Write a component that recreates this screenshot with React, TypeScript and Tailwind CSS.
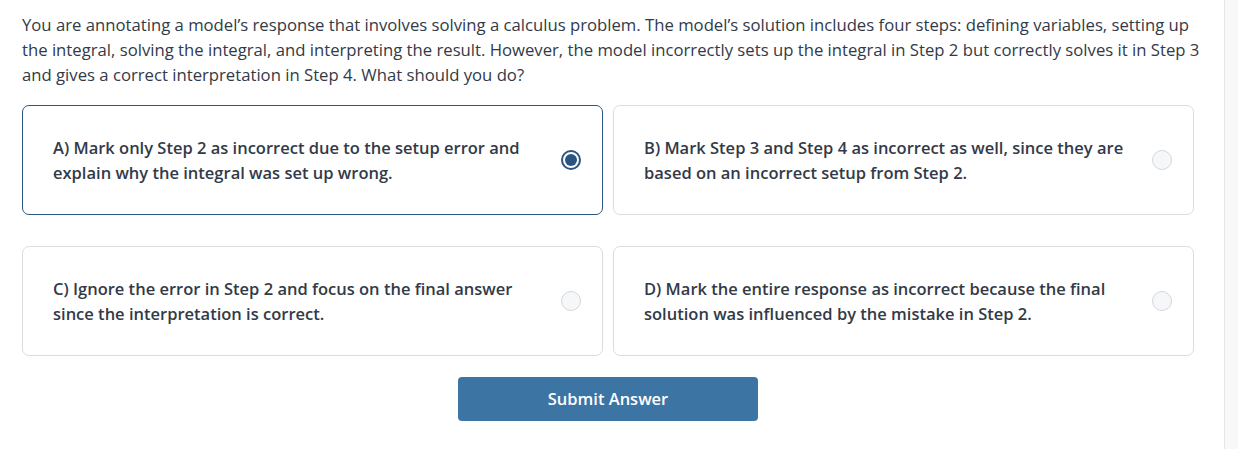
import React, { useState } from "react";

const options = [
  {
    id: "A",
    lines: ["A) Mark only Step 2 as incorrect due to the setup error and", "explain why the integral was set up wrong."],
  },
  {
    id: "B",
    lines: ["B) Mark Step 3 and Step 4 as incorrect as well, since they are", "based on an incorrect setup from Step 2."],
  },
  {
    id: "C",
    lines: ["C) Ignore the error in Step 2 and focus on the final answer", "since the interpretation is correct."],
  },
  {
    id: "D",
    lines: ["D) Mark the entire response as incorrect because the final", "solution was influenced by the mistake in Step 2."],
  },
];

function Radio({ checked }: { checked: boolean }) {
  if (checked) {
    return (
      <span className="flex h-[20px] w-[20px] shrink-0 items-center justify-center rounded-full border-2 border-[#2b5580] bg-white">
        <span className="h-[12px] w-[12px] rounded-full bg-[#2b5580]" />
      </span>
    );
  }
  return <span className="block h-[20px] w-[20px] shrink-0 rounded-full border border-[#d3d7dd] bg-[#f6f7f9]" />;
}

export default function App() {
  const [selected, setSelected] = useState("A");
  return (
    <div className="flex h-[449px] w-full overflow-hidden bg-white" style={{ fontFamily: "'Open Sans', 'Noto Sans', sans-serif" }}>
      <div className="min-w-0 flex-1 pl-[22px] pr-[30px] pt-[12px]">
        <p className="whitespace-nowrap text-[16.7px] leading-[25px] text-[#323a48]">
          You are annotating a model’s response that involves solving a calculus problem. The model’s solution includes four steps: defining variables, setting up
          <br />
          the integral, solving the integral, and interpreting the result. However, the model incorrectly sets up the integral in Step 2 but correctly solves it in Step 3
          <br />
          and gives a correct interpretation in Step 4. What should you do?
        </p>
        <div className="mt-[18px] grid grid-cols-2 gap-x-[10px] gap-y-[31px]">
          {options.map((o) => {
            const checked = selected === o.id;
            return (
              <button
                key={o.id}
                onClick={() => setSelected(o.id)}
                className={`flex h-[110px] min-w-0 items-center justify-between rounded-[7px] border bg-white pl-[30px] pr-[21px] text-left ${
                  checked ? "border-[#2b5580]" : "border-[#d9dce1]"
                }`}
              >
                <span className="whitespace-nowrap text-[16.5px] font-semibold leading-[25px] text-[#323a48]">
                  {o.lines[0]}
                  <br />
                  {o.lines[1]}
                </span>
                <Radio checked={checked} />
              </button>
            );
          })}
        </div>
        <div className="mt-[21px] flex justify-center">
          <button className="h-[44px] w-[300px] rounded-[4px] bg-[#3c74a3] text-[16.5px] font-semibold text-white">
            Submit Answer
          </button>
        </div>
      </div>
      <div className="h-full w-[14px] shrink-0 border-l border-[#e6e6e6] bg-[#f8f8f8]" />
    </div>
  );
}
